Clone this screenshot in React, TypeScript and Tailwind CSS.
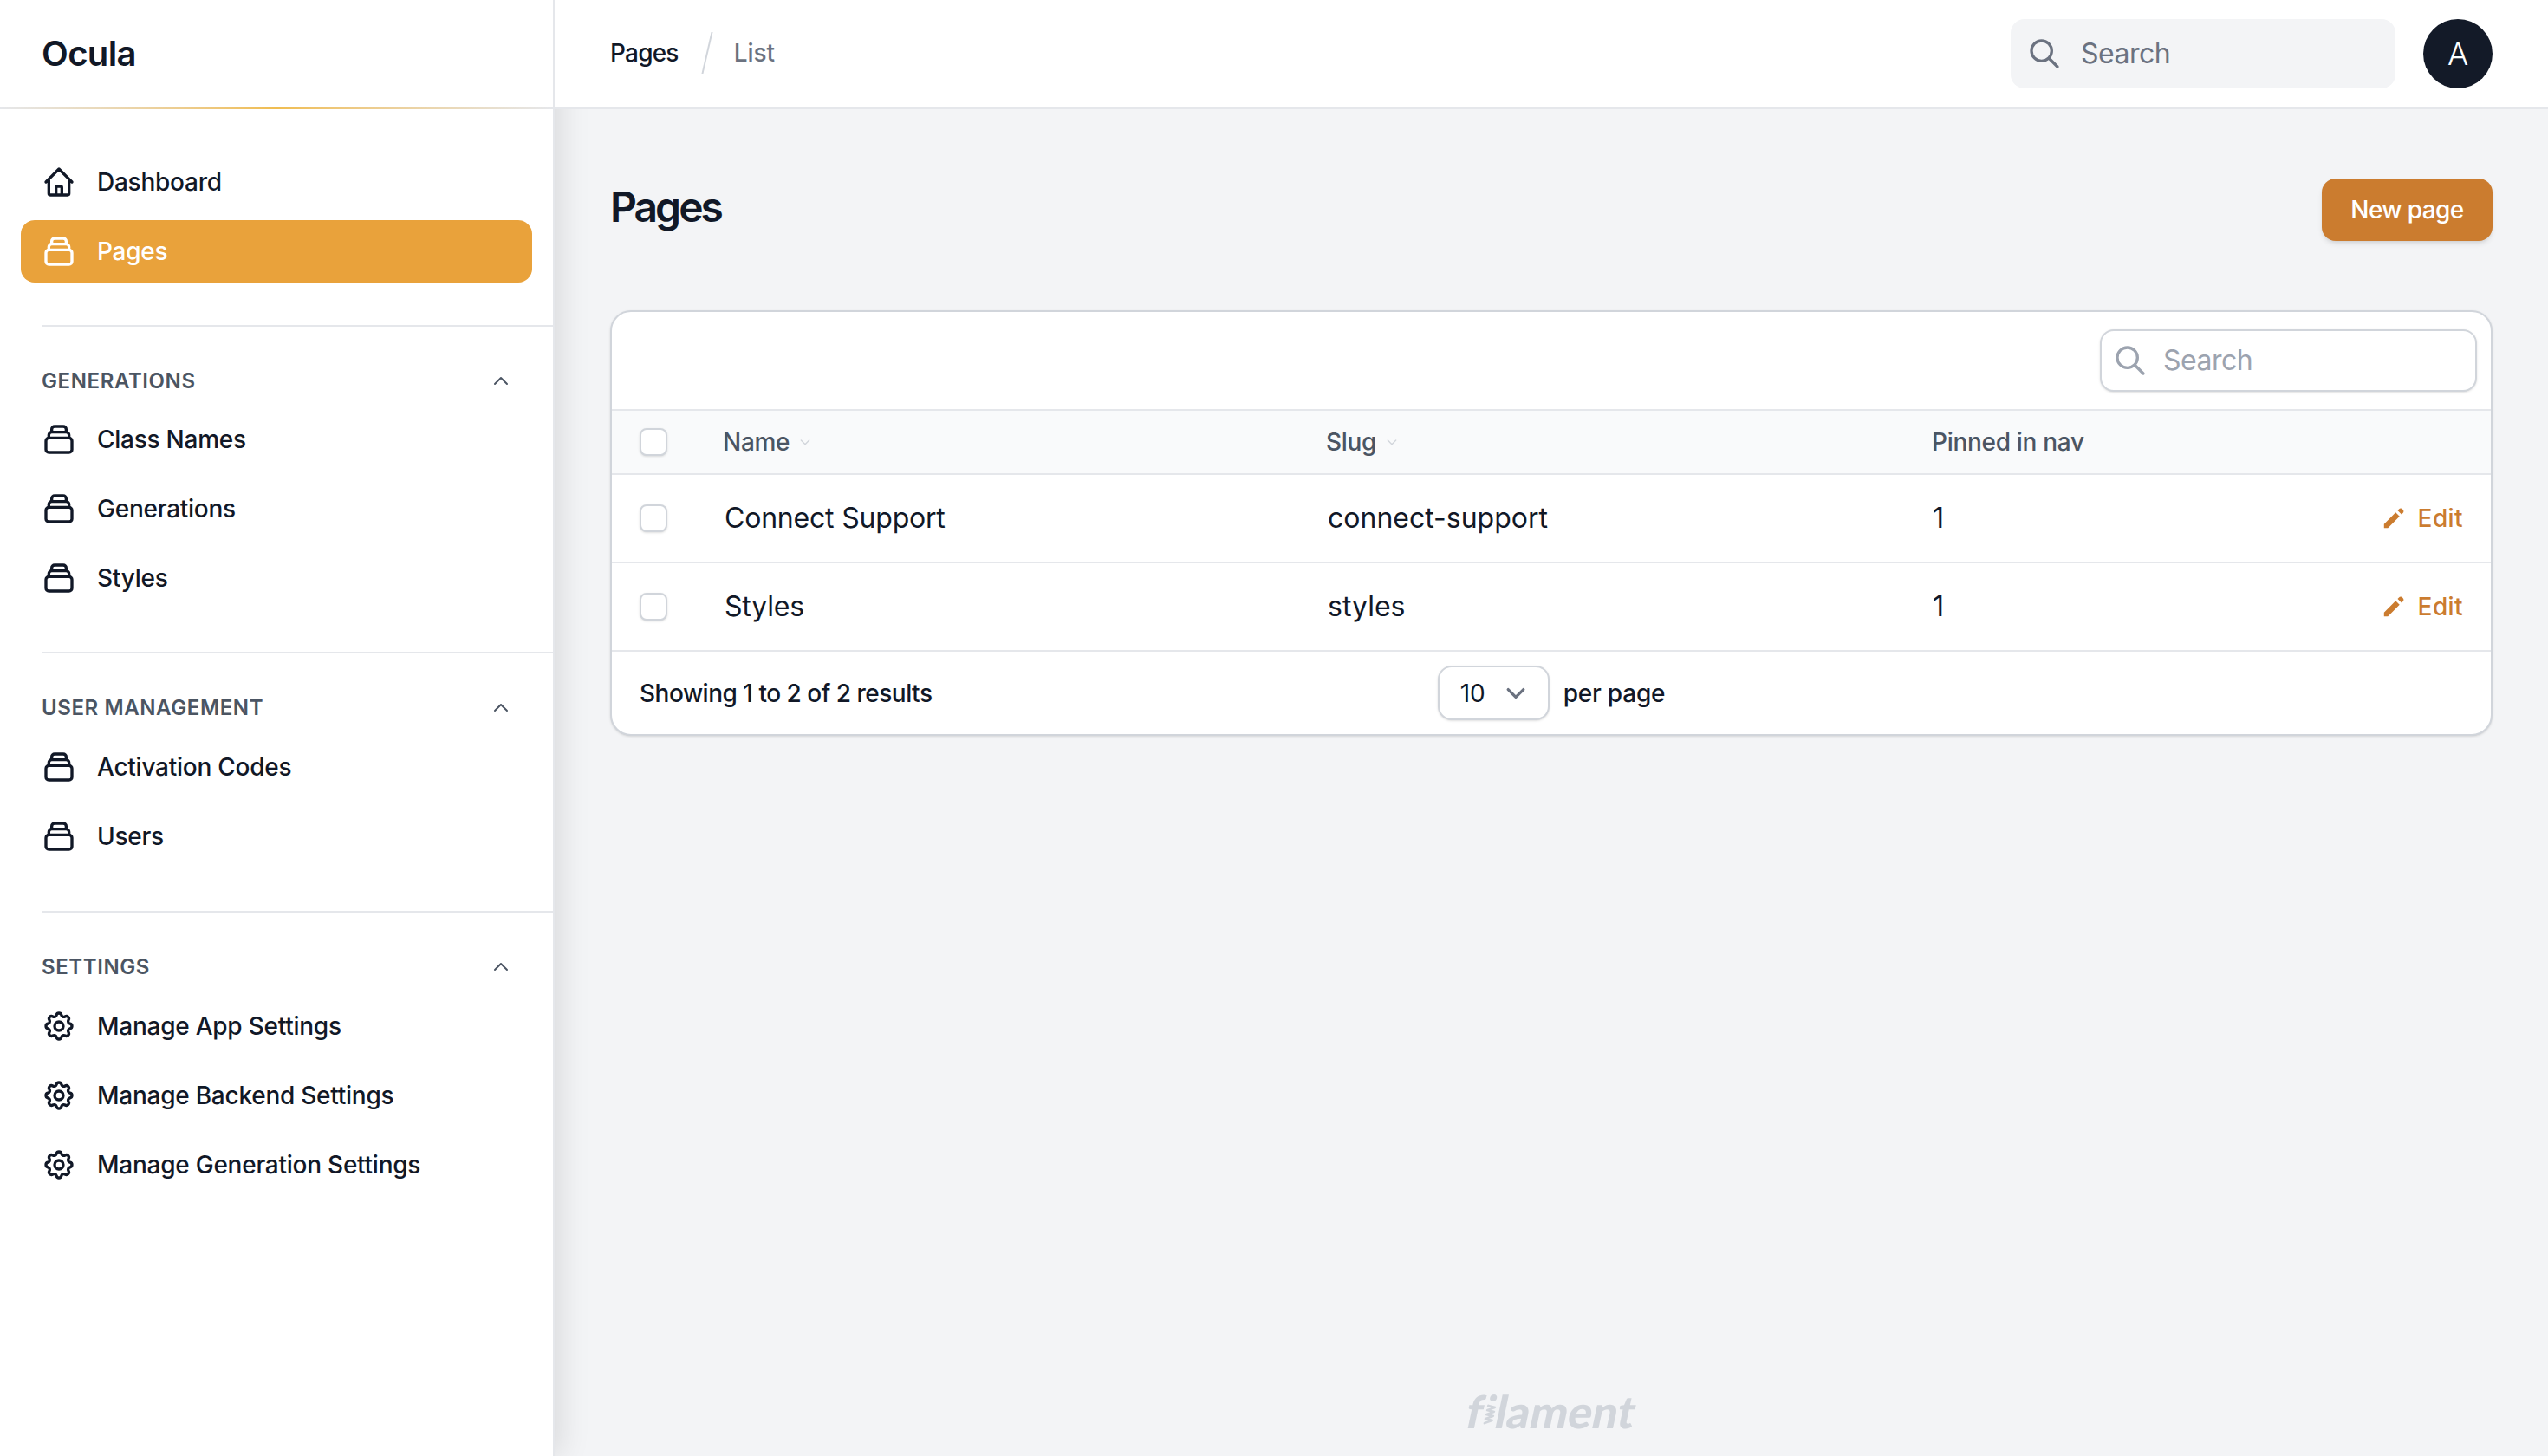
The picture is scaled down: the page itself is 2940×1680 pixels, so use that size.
import type { ReactNode } from "react";

const HOME =
  "M3 12l2-2m0 0l7-7 7 7M5 10v10a1 1 0 001 1h3m10-11l2 2m-2-2v10a1 1 0 01-1 1h-3m-6 0a1 1 0 001-1v-4a1 1 0 011-1h2a1 1 0 011 1v4a1 1 0 001 1m-6 0h6";
const COLLECTION =
  "M19 11H5m14 0a2 2 0 012 2v6a2 2 0 01-2 2H5a2 2 0 01-2-2v-6a2 2 0 012-2m14 0V9a2 2 0 00-2-2M5 11V9a2 2 0 012-2m0 0V5a2 2 0 012-2h6a2 2 0 012 2v2M7 7h10";
const COG =
  "M10.325 4.317c.426-1.756 2.924-1.756 3.35 0a1.724 1.724 0 002.573 1.066c1.543-.94 3.31.826 2.37 2.37a1.724 1.724 0 001.065 2.572c1.756.426 1.756 2.924 0 3.35a1.724 1.724 0 00-1.066 2.573c.94 1.543-.826 3.31-2.37 2.37a1.724 1.724 0 00-2.572 1.065c-.426 1.756-2.924 1.756-3.35 0a1.724 1.724 0 00-2.573-1.066c-1.543.94-3.31-.826-2.37-2.37a1.724 1.724 0 00-1.065-2.572c-1.756-.426-1.756-2.924 0-3.35a1.724 1.724 0 001.066-2.573c-.94-1.543.826-3.31 2.37-2.37.996.608 2.296.07 2.572-1.065zM15 12a3 3 0 11-6 0 3 3 0 016 0z";
const SEARCH = "M21 21l-6-6m2-5a7 7 0 11-14 0 7 7 0 0114 0z";

function Icon({ d, className }: { d: string; className: string }) {
  return (
    <svg viewBox="0 0 24 24" fill="none" stroke="currentColor" strokeWidth={2} strokeLinecap="round" strokeLinejoin="round" className={className}>
      <path d={d} />
    </svg>
  );
}

function NavItem({ icon, label, active }: { icon: string; label: string; active?: boolean }) {
  return (
    <li className={`flex h-[72px] items-center gap-6 rounded-[16px] px-6 text-[28px] tracking-[-0.25px] font-medium ${active ? "bg-[#e9a23b] text-white" : "text-[#111827]"}`}>
      <Icon d={icon} className="h-10 w-10 shrink-0" />
      <span>{label}</span>
    </li>
  );
}

function NavGroup({ label, dividerClass, listClass, children }: { label: string; dividerClass: string; listClass: string; children: ReactNode }) {
  return (
    <div>
      <div className={`${dividerClass} ml-12 h-[2px] bg-[#e5e7eb]`} />
      <div className="mt-[47px] flex h-8 items-center justify-between pr-12 pl-12 text-[#4b5563]">
        <span className="text-[24px] font-semibold tracking-[0.6px] uppercase">{label}</span>
        <Icon d="M5 15l7-7 7 7" className="h-6 w-6" />
      </div>
      <ul className={`${listClass} flex flex-col gap-2 px-6`}>{children}</ul>
    </div>
  );
}

function Checkbox() {
  return <div className="h-8 w-8 rounded-[8px] border-2 border-[#d1d5db] bg-white shadow-sm" />;
}

function SortHeader({ label }: { label: string }) {
  return (
    <div className="flex items-center gap-[10px]">
      <span>{label}</span>
      <Icon d="M19 9l-7 7-7-7" className="h-4 w-4 text-[#d1d5db]" />
    </div>
  );
}

function TableRow({ name, slug }: { name: string; slug: string }) {
  return (
    <tr>
      <td className="h-[102px] border-b-2 border-[#e5e7eb] pl-8">
        <Checkbox />
      </td>
      <td className="border-b-2 border-[#e5e7eb] pl-[33px] text-[32px] tracking-[-0.2px] text-[#111827]">{name}</td>
      <td className="border-b-2 border-[#e5e7eb] pl-[34px] text-[32px] text-[#111827]">{slug}</td>
      <td className="border-b-2 border-[#e5e7eb] pl-[33px] text-[32px] text-[#111827]">1</td>
      <td className="border-b-2 border-[#e5e7eb] pr-8">
        <div className="flex items-center justify-end gap-3 text-[28px] font-medium tracking-[0.4px] text-[#cb7c2f]">
          <svg viewBox="0 0 20 20" fill="currentColor" className="h-8 w-8">
            <path d="M13.586 3.586a2 2 0 112.828 2.828l-.793.793-2.828-2.828.793-.793zM11.379 5.793L3 14.172V17h2.828l8.38-8.379-2.83-2.828z" />
          </svg>
          <span>Edit</span>
        </div>
      </td>
    </tr>
  );
}

export default function App() {
  return (
    <div className="flex h-screen w-full overflow-hidden bg-[#f3f4f6] font-['Inter',sans-serif]">
      {/* Sidebar */}
      <aside className="relative z-[1] w-[640px] shrink-0 border-r-2 border-[#e5e7eb] bg-white shadow-[8px_0_32px_rgba(0,0,0,0.1)]">
        <div className="flex h-[124px] items-center pl-12 text-[40px] font-semibold tracking-[-0.6px] text-[#111827]">Ocula</div>
        <div className="h-[2px] bg-linear-to-r from-[#e5e7eb] via-[#f0bd50] to-[#e5e7eb]" />
        <nav className="pt-12">
          <ul className="flex flex-col gap-2 px-6">
            <NavItem icon={HOME} label="Dashboard" />
            <NavItem icon={COLLECTION} label="Pages" active />
          </ul>
          <NavGroup label="Generations" dividerClass="mt-[49px]" listClass="mt-[15px]">
            <NavItem icon={COLLECTION} label="Class Names" />
            <NavItem icon={COLLECTION} label="Generations" />
            <NavItem icon={COLLECTION} label="Styles" />
          </NavGroup>
          <NavGroup label="User Management" dividerClass="mt-[49px]" listClass="mt-[16px]">
            <NavItem icon={COLLECTION} label="Activation Codes" />
            <NavItem icon={COLLECTION} label="Users" />
          </NavGroup>
          <NavGroup label="Settings" dividerClass="mt-[50px]" listClass="mt-[16px]">
            <NavItem icon={COG} label="Manage App Settings" />
            <NavItem icon={COG} label="Manage Backend Settings" />
            <NavItem icon={COG} label="Manage Generation Settings" />
          </NavGroup>
        </nav>
      </aside>

      {/* Main */}
      <main className="flex min-w-0 flex-1 flex-col">
        <header className="relative z-[2] flex h-[126px] items-center justify-between border-b-2 border-[#e5e7eb] bg-white pr-16 pl-16">
          <div className="flex items-center pb-[2px] text-[28px] font-medium">
            <span className="tracking-[-0.8px] text-[#111827]">Pages</span>
            <div className="mr-[30px] ml-[32px] h-[48px] w-[2px] skew-x-[-13deg] bg-[#d1d5db]" />
            <span className="text-[#6b7280]">List</span>
          </div>
          <div className="flex items-center gap-8">
            <div className="flex h-20 w-[444px] items-center gap-[22px] rounded-[16px] bg-[#f3f4f6] pl-[19px] text-[32px] tracking-[-0.5px] text-[#6b7280]">
              <Icon d={SEARCH} className="h-10 w-10" />
              <span>Search</span>
            </div>
            <div className="flex h-20 w-20 items-center justify-center rounded-full bg-[#131a28] text-[36px] font-light text-white">A</div>
          </div>
        </header>

        <div className="flex flex-1 flex-col px-16 pt-20">
          <div className="flex items-center justify-between">
            <h1 className="pb-[7px] text-[48px] leading-[58px] font-semibold tracking-[-3px] text-[#111827]">Pages</h1>
            <button className="flex h-[72px] w-[197px] items-center justify-center rounded-[16px] bg-[#cb7c2f] text-[28px] font-medium tracking-[-0.6px] text-white shadow-md">New page</button>
          </div>

          <section className="mt-20 overflow-hidden rounded-[24px] border-2 border-[#d1d5db] bg-white shadow-sm">
            <div className="flex h-[114px] justify-end border-b-2 border-[#e5e7eb] pt-5 pr-4">
              <div className="flex h-[72px] w-[435px] items-center gap-[18px] rounded-[16px] border-2 border-[#d1d5db] bg-white pl-[13px] text-[32px] tracking-[-0.5px] text-[#9ca3af] shadow-sm">
                <Icon d={SEARCH} className="h-10 w-10" />
                <span>Search</span>
              </div>
            </div>
            <table className="w-full table-fixed border-separate border-spacing-0">
              <colgroup>
                <col className="w-[97px]" />
                <col className="w-[695px]" />
                <col className="w-[699px]" />
                <col />
                <col className="w-[200px]" />
              </colgroup>
              <thead>
                <tr className="bg-[#f9fafb] text-left text-[28px] font-medium tracking-[-0.3px] text-[#4b5563]">
                  <th className="h-[74px] border-b-2 border-[#e5e7eb] pl-8">
                    <Checkbox />
                  </th>
                  <th className="border-b-2 border-[#e5e7eb] pl-[31px] font-medium">
                    <SortHeader label="Name" />
                  </th>
                  <th className="border-b-2 border-[#e5e7eb] pl-8 font-medium">
                    <SortHeader label="Slug" />
                  </th>
                  <th className="border-b-2 border-[#e5e7eb] pl-8 font-medium">Pinned in nav</th>
                  <th className="border-b-2 border-[#e5e7eb]" />
                </tr>
              </thead>
              <tbody>
                <TableRow name="Connect Support" slug="connect-support" />
                <TableRow name="Styles" slug="styles" />
              </tbody>
            </table>
            <div className="grid h-[95px] grid-cols-3 items-center px-8 text-[28px] font-medium text-[#111827]">
              <span className="tracking-[-0.5px]">Showing 1 to 2 of 2 results</span>
              <div className="flex items-center justify-center gap-4">
                <div className="flex h-[63px] w-[129px] items-center rounded-[16px] border-2 border-[#d1d5db] bg-white pl-6 font-normal shadow-sm">
                  <span>10</span>
                  <svg viewBox="0 0 20 20" fill="none" stroke="#6b7280" strokeWidth={1.5} strokeLinecap="round" strokeLinejoin="round" className="ml-auto mr-[15px] h-[44px] w-[44px]">
                    <path d="M6 8l4 4 4-4" />
                  </svg>
                </div>
                <span className="tracking-[-0.2px]">per page</span>
              </div>
            </div>
          </section>

          <div className="mt-auto flex justify-center pb-[22px]">
            <div className="flex -skew-x-12 font-['Lato',sans-serif] text-[52px] leading-[60px] font-black text-[#d1d5db]">
              <span>f</span>
              <span className="relative w-[15px]">
                <span className="text-transparent">i</span>
                <svg viewBox="0 0 16 40" fill="none" stroke="#d1d5db" strokeWidth={2.8} strokeLinecap="round" strokeLinejoin="round" className="absolute top-[11px] left-0 h-[40px] w-[16px]">
                  <circle cx="8" cy="4" r="4" fill="#d1d5db" stroke="none" />
                  <path d="M4 13l8 2-8 3 8 2-8 3 8 2-8 3 8 2-8 3" />
                </svg>
              </span>
              <span>lament</span>
            </div>
          </div>
        </div>
      </main>
    </div>
  );
}
